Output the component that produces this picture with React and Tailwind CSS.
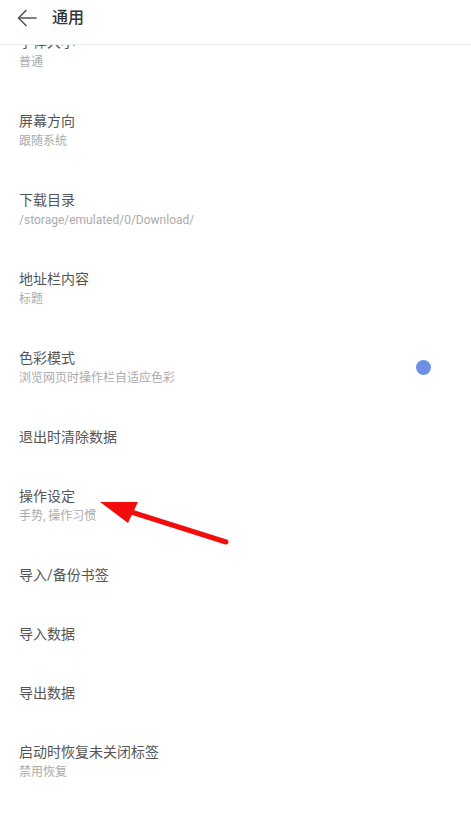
import React from 'react';

const rows = [
  { title: '字体大小', sub: '普通' },
  { title: '屏幕方向', sub: '跟随系统' },
  { title: '下载目录', sub: '/storage/emulated/0/Download/' },
  { title: '地址栏内容', sub: '标题' },
  { title: '色彩模式', sub: '浏览网页时操作栏自适应色彩', toggle: true },
  { title: '退出时清除数据' },
  { title: '操作设定', sub: '手势, 操作习惯' },
  { title: '导入/备份书签' },
  { title: '导入数据' },
  { title: '导出数据' },
  { title: '启动时恢复未关闭标签', sub: '禁用恢复' },
];

const SettingRow = ({ title, sub, toggle }) => (
  <div className={`flex items-center justify-between pl-[19px] pr-[40px] ${sub ? 'h-[79px]' : 'h-[59px]'}`}>
    <div className="flex flex-col">
      <span className="text-[14px] leading-[20px] text-[#555555]">{title}</span>
      {sub && <span className="mt-[1px] text-[12px] leading-[18px] text-[#ababab]">{sub}</span>}
    </div>
    {toggle && <span className="block w-[15px] h-[15px] rounded-full bg-[#6d8fe4]" />}
  </div>
);

export default function App() {
  return (
    <div
      className="relative w-full h-[815px] overflow-hidden bg-white"
      style={{ fontFamily: 'Roboto, "Noto Sans CJK SC", sans-serif' }}
    >
      {/* Header */}
      <div className="relative z-10 h-[45px] pb-[8px] flex items-center bg-white border-b border-[#ececec]">
        <svg width="20" height="18" viewBox="0 0 20 18" className="ml-[17px]" fill="none" stroke="#555" strokeWidth="1.6" strokeLinecap="round" strokeLinejoin="round">
          <path d="M19 9H2" />
          <path d="M9 1.5L1.5 9L9 16.5" />
        </svg>
        <span className="ml-[15px] text-[16px] font-medium text-[#333333]">通用</span>
      </div>

      {/* List, scrolled */}
      <div className="-mt-[33px] flex flex-col">
        {rows.map((r) => (
          <SettingRow key={r.title} {...r} />
        ))}
      </div>

      {/* Annotation arrow */}
      <svg className="absolute left-0 top-0 pointer-events-none" width="471" height="815" viewBox="0 0 471 815">
        <line x1="226" y1="542" x2="125" y2="510" stroke="#f20d0d" strokeWidth="5" strokeLinecap="round" />
        <polygon points="100,502 138,502 128,523" fill="#f20d0d" />
      </svg>
    </div>
  );
}
